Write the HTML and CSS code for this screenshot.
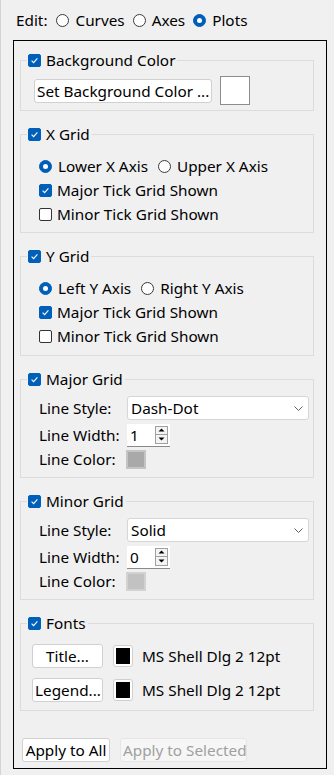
FILE: index.html
```html
<!DOCTYPE html>
<html lang="en">
<head>
    <meta charset="UTF-8">
    <title>Plot Properties</title>
    <link rel="stylesheet" href="styles.css">
</head>
<body>
    <div class="editbar">
        <span class="edit-lbl">Edit:</span>
        <span class="opt"><span class="radio"></span>Curves</span>
        <span class="opt"><span class="radio"></span>Axes</span>
        <span class="opt"><span class="radio on"></span>Plots</span>
    </div>

    <div class="panel">
        <!-- Background -->
        <fieldset class="group">
            <legend><span class="cb on"><svg viewBox="0 0 11 11"><path d="M2.6 5.6l2 2 3.8-4.2"/></svg></span>Background Color</legend>
            <div class="gbody g-bg">
                <button class="btn bg-btn">Set Background Color ...</button>
                <span class="bg-swatch"></span>
            </div>
        </fieldset>

        <!-- X grid -->
        <fieldset class="group">
            <legend><span class="cb on"><svg viewBox="0 0 11 11"><path d="M2.6 5.6l2 2 3.8-4.2"/></svg></span>X Grid</legend>
            <div class="gbody g-axis g-x">
                <div class="row">
                    <span class="opt"><span class="radio on"></span>Lower X Axis</span>
                    <span class="opt"><span class="radio"></span>Upper X Axis</span>
                </div>
                <div class="row"><span class="cb on"><svg viewBox="0 0 11 11"><path d="M2.6 5.6l2 2 3.8-4.2"/></svg></span>Major Tick Grid Shown</div>
                <div class="row"><span class="cb"></span>Minor Tick Grid Shown</div>
            </div>
        </fieldset>

        <!-- Y grid -->
        <fieldset class="group">
            <legend><span class="cb on"><svg viewBox="0 0 11 11"><path d="M2.6 5.6l2 2 3.8-4.2"/></svg></span>Y Grid</legend>
            <div class="gbody g-axis">
                <div class="row">
                    <span class="opt"><span class="radio on"></span>Left Y Axis</span>
                    <span class="opt"><span class="radio"></span>Right Y Axis</span>
                </div>
                <div class="row"><span class="cb on"><svg viewBox="0 0 11 11"><path d="M2.6 5.6l2 2 3.8-4.2"/></svg></span>Major Tick Grid Shown</div>
                <div class="row"><span class="cb"></span>Minor Tick Grid Shown</div>
            </div>
        </fieldset>

        <!-- Major grid -->
        <fieldset class="group">
            <legend><span class="cb on"><svg viewBox="0 0 11 11"><path d="M2.6 5.6l2 2 3.8-4.2"/></svg></span>Major Grid</legend>
            <div class="gbody g-line">
                <div class="row">
                    <span class="field-lbl">Line Style:</span>
                    <span class="combo">Dash-Dot<svg class="chev" viewBox="0 0 9 5"><path d="M0.5 0.5l4 4 4-4"/></svg></span>
                </div>
                <div class="row row-spin">
                    <span class="field-lbl">Line Width:</span>
                    <span class="spin">1
                        <span class="spin-btns">
                            <span class="arrow"><svg viewBox="0 0 7 4"><path d="M0.5 3.5h6l-3-3z"/></svg></span>
                            <span class="arrow"><svg viewBox="0 0 7 4"><path d="M0.5 0.5h6l-3 3z"/></svg></span>
                        </span>
                    </span>
                </div>
                <div class="row">
                    <span class="field-lbl">Line Color:</span>
                    <span class="line-swatch"></span>
                </div>
            </div>
        </fieldset>

        <!-- Minor grid -->
        <fieldset class="group">
            <legend><span class="cb on"><svg viewBox="0 0 11 11"><path d="M2.6 5.6l2 2 3.8-4.2"/></svg></span>Minor Grid</legend>
            <div class="gbody g-line">
                <div class="row">
                    <span class="field-lbl">Line Style:</span>
                    <span class="combo">Solid<svg class="chev" viewBox="0 0 9 5"><path d="M0.5 0.5l4 4 4-4"/></svg></span>
                </div>
                <div class="row row-spin">
                    <span class="field-lbl">Line Width:</span>
                    <span class="spin">0
                        <span class="spin-btns">
                            <span class="arrow"><svg viewBox="0 0 7 4"><path d="M0.5 3.5h6l-3-3z"/></svg></span>
                            <span class="arrow"><svg viewBox="0 0 7 4"><path d="M0.5 0.5h6l-3 3z"/></svg></span>
                        </span>
                    </span>
                </div>
                <div class="row">
                    <span class="field-lbl">Line Color:</span>
                    <span class="line-swatch light"></span>
                </div>
            </div>
        </fieldset>

        <!-- Fonts -->
        <fieldset class="group">
            <legend><span class="cb on"><svg viewBox="0 0 11 11"><path d="M2.6 5.6l2 2 3.8-4.2"/></svg></span>Fonts</legend>
            <div class="gbody g-fonts">
                <div class="row font-row">
                    <button class="btn font-btn">Title...</button>
                    <span class="font-swatch"><span></span></span>
                    <span class="font-name">MS Shell Dlg 2 12pt</span>
                </div>
                <div class="row font-row">
                    <button class="btn font-btn">Legend...</button>
                    <span class="font-swatch"><span></span></span>
                    <span class="font-name">MS Shell Dlg 2 12pt</span>
                </div>
            </div>
        </fieldset>

        <div class="actions">
            <button class="btn apply-all">Apply to All</button>
            <button class="btn apply-sel" disabled>Apply to Selected</button>
        </div>
    </div>
</body>
</html>
```

FILE: styles.css
```css
body {
    margin: 0;
    height: 775px;
    box-sizing: border-box;
    border-left: 1px solid #d4d4d4;
    background: #f0f0f0;
    color: #000;
    font-family: "Noto Sans", sans-serif;
    font-size: 15.3px;
    overflow: hidden;
}

/* top radio bar */
.editbar {
    height: 40px;
    display: flex;
    align-items: center;
    padding-left: 15px;
}

.edit-lbl {
    margin-right: 9px;
}

.opt {
    display: flex;
    align-items: center;
    margin-right: 8px;
}

.radio {
    width: 13px;
    height: 13px;
    box-sizing: border-box;
    border: 1px solid #3a3a3a;
    border-radius: 50%;
    background: #fff;
    margin-right: 6px;
    flex: none;
}

.radio.on {
    background: #005fb8;
    border-color: #005fb8;
    display: flex;
    align-items: center;
    justify-content: center;
}

.radio.on::after {
    content: "";
    width: 5px;
    height: 5px;
    border-radius: 50%;
    background: #fff;
}

.cb {
    width: 13px;
    height: 13px;
    box-sizing: border-box;
    border: 1px solid #333;
    border-radius: 2px;
    background: #fff;
    margin-right: 5px;
    display: flex;
    flex: none;
}

.cb.on {
    background: #005fb8;
    border-color: #005fb8;
}

.cb svg {
    width: 11px;
    height: 11px;
}

.cb path {
    fill: none;
    stroke: #fff;
    stroke-width: 1.1;
}

/* main frame */
.panel {
    margin-left: 12px;
    width: 314px;
    height: 729px;
    box-sizing: border-box;
    border: 1px solid #000;
    padding: 12px 0 0 6px;
}

.group {
    margin: 0 0 16px;
    width: 294px;
    box-sizing: border-box;
    border: 1px solid #dcdcdc;
    padding: 0 4px 0 6px;
}

.group legend {
    height: 14px;
    padding: 0 2px 0 1px;
    display: flex;
    align-items: center;
}

.row {
    display: flex;
    align-items: center;
    height: 24px;
}

.g-bg {
    display: flex;
    align-items: center;
    padding: 9px 0 5px 7px;
}

.bg-btn {
    width: 178px;
    text-align: left;
}

.bg-swatch {
    width: 30px;
    height: 29px;
    box-sizing: border-box;
    margin-left: 8px;
    border: 1px solid #8c8c8c;
    background: #fff;
}

.g-axis {
    padding: 13px 0 7px 12px;
}

.g-x {
    padding-bottom: 6px;
}

.g-axis .opt {
    margin-right: 10px;
}

/* line settings */
.g-line {
    padding: 10px 0 6px 12px;
}

.field-lbl {
    width: 88px;
    flex: none;
}

.combo {
    width: 182px;
    height: 24px;
    box-sizing: border-box;
    border: 1px solid #d6d6d6;
    border-radius: 3px;
    background: #fff;
    display: flex;
    align-items: center;
    justify-content: space-between;
    padding: 0 5px 0 3px;
}

.chev {
    width: 9px;
    height: 5px;
}

.chev path {
    fill: none;
    stroke: #606060;
    stroke-width: 1;
}

.row-spin {
    margin-top: 3px;
}

.spin {
    width: 43px;
    height: 23px;
    box-sizing: border-box;
    background: #fff;
    border-bottom: 1px solid #8a8a8a;
    display: flex;
    align-items: center;
    justify-content: space-between;
    padding: 0 2px 0 3px;
}

.spin-btns {
    display: flex;
    flex-direction: column;
}

.arrow {
    width: 13px;
    height: 9px;
    box-sizing: border-box;
    border: 1px solid #a0a0a0;
    background: #f4f4f4;
    display: flex;
    align-items: center;
    justify-content: center;
}

.arrow + .arrow {
    border-top: none;
    height: 9px;
}

.arrow svg {
    width: 7px;
    height: 4px;
}

.arrow path {
    fill: #000;
}

.line-swatch {
    width: 20px;
    height: 19px;
    box-sizing: border-box;
    border: 2px solid #c4c4c4;
    background: #a9a9a9;
    margin-left: -1px;
}

.line-swatch.light {
    border-color: #d2d2d2;
    background: #c2c2c2;
}

/* fonts */
.g-fonts {
    padding: 13px 0 8px 5px;
}

.font-row {
    height: 25px;
}

.font-row + .font-row {
    margin-top: 9px;
}

.font-btn {
    width: 71px;
    height: 25px;
    text-align: center;
}

.font-swatch {
    width: 20px;
    height: 22px;
    box-sizing: border-box;
    margin-left: 10px;
    padding: 2px;
    border: 1px solid #cfcfcf;
    border-radius: 3px;
    background: #fff;
    display: flex;
}

.font-swatch span {
    flex: 1;
    background: #000;
}

.font-name {
    margin-left: 9px;
}

/* buttons */
.btn {
    font: inherit;
    color: #000;
    height: 24px;
    box-sizing: border-box;
    padding: 0 2px;
    background: #fff;
    border: 1px solid #d0d0d0;
    border-radius: 3px;
    white-space: nowrap;
}

.actions {
    display: flex;
    gap: 10px;
    margin-top: 27px;
    padding-left: 2px;
}

.apply-all {
    width: 88px;
}

.apply-sel {
    width: 127px;
    background: #f6f6f6;
    border-color: #e6e6e6;
    color: #a0a0a0;
}
```
